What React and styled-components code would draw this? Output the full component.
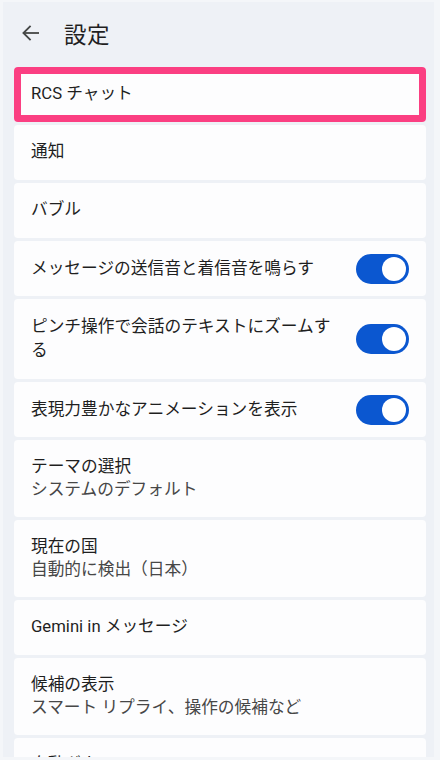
import styled, { createGlobalStyle } from 'styled-components';

const GlobalStyle = createGlobalStyle`
  html, body {
    margin: 0;
    padding: 0;
    background: #eef1f6;
    overflow: hidden;
  }
  body {
    font-family: Roboto, "Noto Sans CJK JP", "Noto Sans", sans-serif;
    color: #1f1f1f;
  }
`;

const SFrame = styled.div`
  box-sizing: border-box;
  height: 760px;
  overflow: hidden;
  background: #eef1f6;
  border-style: solid;
  border-color: #f4f6f9;
  border-width: 2px 6px 3px 3px;
`;

const SHeader = styled.header`
  display: flex;
  align-items: center;
  gap: 21px;
  height: 65px;
  padding: 0 0 0 16px;
  box-sizing: border-box;
`;

const SBackButton = styled.button`
  display: flex;
  align-items: center;
  justify-content: center;
  width: 24px;
  height: 24px;
  margin-top: -3px;
  padding: 0;
  border: none;
  background: none;
  color: #444746;
`;

const STitle = styled.h1`
  margin: 0;
  font-size: 22.5px;
  font-weight: 400;
  line-height: 30px;
  letter-spacing: 0.5px;
  color: #1f1f1f;
`;

const SList = styled.ul`
  display: flex;
  flex-direction: column;
  gap: 3px;
  margin: 0;
  padding: 0 8px 0 11px;
  list-style: none;
`;

const SItem = styled.li`
  display: flex;
  align-items: center;
  gap: 16px;
  flex: none;
  box-sizing: border-box;
  height: ${p => p.$height}px;
  padding: 0 17px;
  background: #fdfdfe;
  border-radius: 4px;
  box-shadow: ${p => (p.$highlight ? 'inset 0 0 0 7px #fb3f82' : 'none')};
`;

const STexts = styled.div`
  flex: 1;
  display: flex;
  flex-direction: column;
  font-size: 16.7px;
  line-height: ${p => (p.$tall ? '24px' : '22.5px')};
`;

const SLabel = styled.span`
  color: #1f1f1f;
`;

const SSub = styled.span`
  color: #474747;
`;

const STrack = styled.span`
  position: relative;
  flex: none;
  width: 53px;
  height: 30px;
  border-radius: 15px;
  background: #0b57d0;
`;

const SThumb = styled.span`
  position: absolute;
  top: 3px;
  right: 3px;
  width: 24px;
  height: 24px;
  border-radius: 50%;
  background: #ffffff;
`;

const ArrowBack = () => (
  <svg width="24" height="24" viewBox="0 0 24 24" fill="none" stroke="currentColor" strokeWidth="1.8">
    <path d="M20 12H5.2" />
    <path d="M11.6 4.8 4.4 12l7.2 7.2" />
  </svg>
);

const Toggle = () => (
  <STrack>
    <SThumb />
  </STrack>
);

const items = [
  { label: 'RCS チャット', highlight: true, height: 55 },
  { label: '通知', height: 55 },
  { label: 'バブル', height: 55 },
  { label: 'メッセージの送信音と着信音を鳴らす', toggle: true, height: 55 },
  { label: 'ピンチ操作で会話のテキストにズームする', toggle: true, height: 80 },
  { label: '表現力豊かなアニメーションを表示', toggle: true, height: 55 },
  { label: 'テーマの選択', sub: 'システムのデフォルト', height: 77 },
  { label: '現在の国', sub: '自動的に検出（日本）', height: 77 },
  { label: 'Gemini in メッセージ', height: 55 },
  { label: '候補の表示', sub: 'スマート リプライ、操作の候補など', height: 77 },
  { label: '自動ダウンロード', height: 55 },
];

const App = () => {
  return (
    <SFrame>
      <GlobalStyle />
      <SHeader>
        <SBackButton aria-label="戻る">
          <ArrowBack />
        </SBackButton>
        <STitle>設定</STitle>
      </SHeader>
      <SList>
        {items.map(item => (
          <SItem key={item.label} $highlight={item.highlight} $height={item.height}>
            <STexts $tall={item.toggle}>
              <SLabel>{item.label}</SLabel>
              {item.sub && <SSub>{item.sub}</SSub>}
            </STexts>
            {item.toggle && <Toggle />}
          </SItem>
        ))}
      </SList>
    </SFrame>
  );
};

export default App;
